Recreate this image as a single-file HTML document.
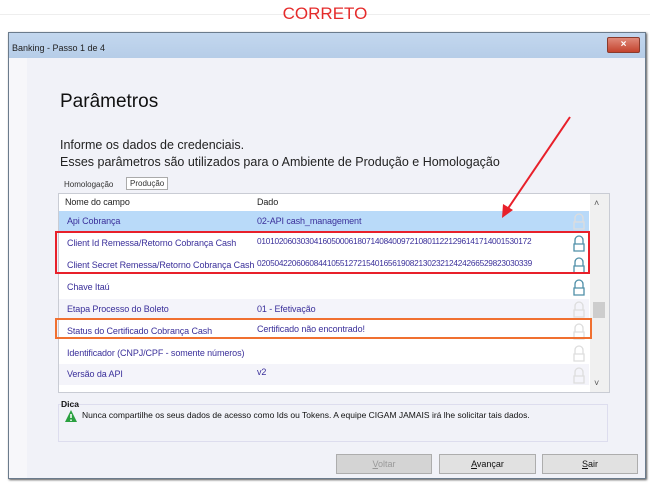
<!DOCTYPE html>
<html><head><meta charset="utf-8"><style>
*{margin:0;padding:0;box-sizing:border-box}
body{width:650px;height:483px;background:#fff;position:relative;overflow:hidden;font-family:"Liberation Sans",sans-serif}
.abs{position:absolute}
.win{left:8px;top:32px;width:638px;height:447px;border:1px solid #6b7b8c;background:#f1f2f8;box-shadow:1px 1px 2px #555}
.title{left:0;top:0;width:636px;height:25px;background:linear-gradient(#c3d7ee,#b6cde8);font-size:9px;color:#222;padding:10px 0 0 3px}
.close{left:598px;top:4px;width:33px;height:16px;background:linear-gradient(#e08a7a,#c4442e);border:1px solid #8a3a2c;border-radius:2px;color:#fff;font-size:10px;text-align:center;line-height:14px;font-weight:bold}
.strip{left:0;top:25px;width:18px;height:420px;background:#f7f7fa}
.grid{left:49px;top:160px;width:552px;height:200px;background:#fff;border:1px solid #c9ccd4}
.row{position:absolute;left:0;width:530px;height:21px;font-size:9px;color:#3a2f9a;line-height:21px;letter-spacing:-0.1px}
.row span{position:absolute}
.c1{left:8px}.c2{left:198px}
.num{line-height:16px;font-size:8.3px;letter-spacing:-0.25px}
.btn{top:421px;height:20px;background:#e1e1e1;border:1px solid #adadad;font-size:9px;text-align:center;line-height:18px;color:#111}
</style></head><body>
<div class="abs" style="left:0;top:14px;width:650px;height:1px;background:#eee"></div>
<div class="abs" style="left:0;top:4px;width:650px;text-align:center;color:#e52b2b;font-size:17px">CORRETO</div>
<div class="abs win">
 <div class="abs title">Banking - Passo 1 de 4</div>
 <div class="abs close">×</div>
 <div class="abs strip"></div>
 <div class="abs" style="left:51px;top:58px;font-size:19px;color:#111">Parâmetros</div>
 <div class="abs" style="left:51px;top:104px;font-size:12.5px;color:#222;line-height:17px">Informe os dados de credenciais.<br>Esses parâmetros são utilizados para o Ambiente de Produção e Homologação</div>
 <div class="abs" style="left:55px;top:147px;font-size:8px;color:#333">Homologação</div>
 <div class="abs" style="left:117px;top:144px;font-size:8px;color:#333;border:1px solid #aaa;background:#fff;padding:1px 3px">Produção</div>
 <div class="abs grid">
  <div class="row" style="top:0;height:17px;line-height:17px;color:#222;background:#fff"><span class="c1" style="left:6px">Nome do campo</span><span class="c2">Dado</span></div>
  <div class="row" style="top:17px;background:#b9daf9"><span class="c1">Api Cobrança</span><span class="c2">02-API cash_management</span></div>
  <div class="row" style="top:39px"><span class="c1">Client Id Remessa/Retorno Cobrança Cash</span><span class="c2 num">010102060303041605000618071408400972108011221296141714001530172</span></div>
  <div class="row" style="top:61px"><span class="c1">Client Secret Remessa/Retorno Cobrança Cash</span><span class="c2 num">020504220606084410551272154016561908213023212424266529823030339</span></div>
  <div class="row" style="top:83px"><span class="c1">Chave Itaú</span></div>
  <div class="row" style="top:105px;background:#f4f4fa"><span class="c1">Etapa Processo do Boleto</span><span class="c2">01 - Efetivação</span></div>
  <div class="row" style="top:127px"><span class="c1">Status do Certificado Cobrança Cash</span><span class="c2" style="line-height:16px">Certificado não encontrado!</span></div>
  <div class="row" style="top:149px;background:#fff"><span class="c1">Identificador (CNPJ/CPF - somente números)</span></div>
  <div class="row" style="top:170px;background:#f4f4fa"><span class="c1">Versão da API</span><span class="c2" style="line-height:16px">v2</span></div>
  <div class="abs" style="left:531px;top:0;width:19px;height:198px;background:#f0f0f0"></div>
  <div class="abs" style="left:534px;top:108px;width:12px;height:16px;background:#cdcdcd"></div>
  <div class="abs" style="left:535px;top:4px;font-size:9px;color:#555">˄</div>
  <div class="abs" style="left:535px;top:184px;font-size:9px;color:#555">˅</div>
  <svg class="abs" style="left:513px;top:18px" width="14" height="180"><g fill="none" stroke-width="1.3">
   <g stroke="#ddd"><path d="M3 10V6a4 4 0 0 1 8 0v4M2 10h10v7H2z"/></g>
   <g stroke="#4f8fa8" transform="translate(0,22)"><path d="M3 10V6a4 4 0 0 1 8 0v4M2 10h10v7H2z"/></g>
   <g stroke="#4f8fa8" transform="translate(0,44)"><path d="M3 10V6a4 4 0 0 1 8 0v4M2 10h10v7H2z"/></g>
   <g stroke="#4f8fa8" transform="translate(0,66)"><path d="M3 10V6a4 4 0 0 1 8 0v4M2 10h10v7H2z"/></g>
   <g stroke="#ddd" transform="translate(0,88)"><path d="M3 10V6a4 4 0 0 1 8 0v4M2 10h10v7H2z"/></g>
   <g stroke="#ddd" transform="translate(0,110)"><path d="M3 10V6a4 4 0 0 1 8 0v4M2 10h10v7H2z"/></g>
   <g stroke="#ddd" transform="translate(0,132)"><path d="M3 10V6a4 4 0 0 1 8 0v4M2 10h10v7H2z"/></g>
   <g stroke="#ddd" transform="translate(0,154)"><path d="M3 10V6a4 4 0 0 1 8 0v4M2 10h10v7H2z"/></g>
  </g></svg>
 </div>
 <div class="abs" style="left:46px;top:198px;width:535px;height:43px;border:2px solid #e8202a"></div>
 <div class="abs" style="left:46px;top:285px;width:537px;height:21px;border:2px solid #f07030"></div>
 <div class="abs" style="left:49px;top:371px;width:550px;height:38px;border:1px solid #dde;background:#f1f2f8"></div>
 <div class="abs" style="left:52px;top:366px;font-size:8.5px;font-weight:bold;color:#111">Dica</div>
 <svg class="abs" style="left:55px;top:376px" width="14" height="14"><path d="M7 1L13 13H1z" fill="#2aa040"/><path d="M7 5v4M7 10.5v1.5" stroke="#fff" stroke-width="1.5"/></svg>
 <div class="abs" style="left:73px;top:377px;font-size:8.5px;color:#111">Nunca compartilhe os seus dados de acesso como Ids ou Tokens. A equipe CIGAM JAMAIS irá lhe solicitar tais dados.</div>
 <div class="abs btn" style="left:327px;width:96px;color:#999;background:#d4d4d4"><u>V</u>oltar</div>
 <div class="abs btn" style="left:430px;width:97px"><u>A</u>vançar</div>
 <div class="abs btn" style="left:533px;width:96px"><u>S</u>air</div>
</div>
<svg class="abs" style="left:0;top:0" width="650" height="483"><path d="M570 117L507 210" stroke="#e8202a" stroke-width="2"/><path d="M502 218L503 204L513 210z" fill="#e8202a"/></svg>
</body></html>
